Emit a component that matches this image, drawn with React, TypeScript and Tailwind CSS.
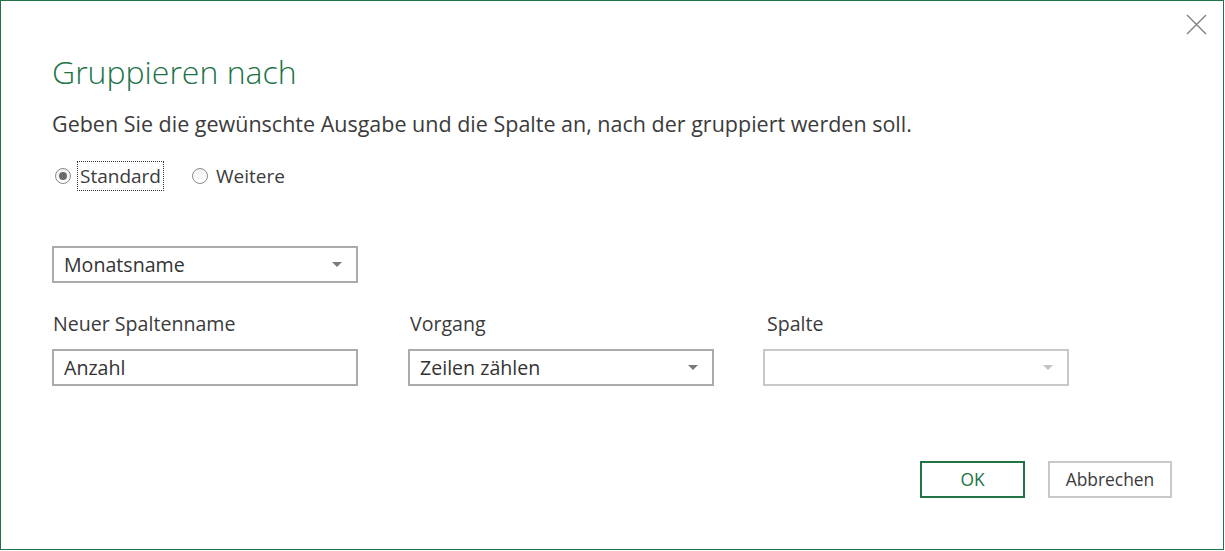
import React from 'react';

function Caret({ light = false }: { light?: boolean }) {
  return (
    <svg width="10" height="6" viewBox="0 0 10 6" className="shrink-0">
      <path d="M0 0 L10 0 L5 5 Z" fill={light ? '#c4c4c4' : '#7a7a7a'} />
    </svg>
  );
}

function Select({ value, disabled = false }: { value?: string; disabled?: boolean }) {
  return (
    <div
      className={
        'w-[306px] h-[37px] flex items-center justify-between pl-[10px] pr-[14px] border-2 bg-white ' +
        (disabled ? 'border-[#c8c8c8]' : 'border-[#ababab]')
      }
    >
      <span className="text-[19.6px] text-[#333] leading-none">{value}</span>
      <Caret light={disabled} />
    </div>
  );
}

function Radio({ checked }: { checked?: boolean }) {
  return (
    <span className="w-[16px] h-[16px] rounded-full border border-[#8a8a8a] bg-gradient-to-b from-[#f2f2f2] to-white flex items-center justify-center shrink-0">
      {checked && <span className="w-[8px] h-[8px] rounded-full bg-[#6b6b6b]" />}
    </span>
  );
}

export default function App() {
  return (
    <div
      className="relative w-[1224px] h-[550px] border border-[#217346] bg-white text-[#333]"
      style={{ fontFamily: '"Open Sans", "Noto Sans", sans-serif' }}
    >
      <button className="absolute right-[16px] top-[13px] w-[21px] h-[21px]">
        <svg width="21" height="21" viewBox="0 0 21 21">
          <path d="M1 1 L20 20 M20 1 L1 20" stroke="#808080" strokeWidth="1.4" />
        </svg>
      </button>

      <div className="pl-[51px] pt-[51px]">
        <h1 className="text-[32px] font-light text-[#217346] leading-[40px]">Gruppieren nach</h1>
        <p className="mt-[19px] text-[21.5px] leading-[26px] text-[#3b3b3b]">
          Geben Sie die gewünschte Ausgabe und die Spalte an, nach der gruppiert werden soll.
        </p>

        <div className="mt-[23px] flex items-center h-[31px] text-[19px] text-[#3b3b3b]">
          <div className="flex items-center">
            <span className="ml-[3px]"><Radio checked /></span>
            <span className="ml-[6px] px-[2px] leading-[28px] border border-dotted border-[#333]">Standard</span>
          </div>
          <div className="flex items-center ml-[28px]">
            <Radio />
            <span className="ml-[8px] leading-[28px]">Weitere</span>
          </div>
        </div>

        <div className="mt-[55px]">
          <Select value="Monatsname" />
        </div>

        <div className="mt-[28px] grid grid-cols-[356px_355px_306px] text-[19.6px] text-[#3b3b3b]">
          <div className="leading-[26px] pl-[1px]">Neuer Spaltenname</div>
          <div className="leading-[26px] pl-[2px]">Vorgang</div>
          <div className="leading-[26px] pl-[4px]">Spalte</div>
        </div>

        <div className="mt-[12px] grid grid-cols-[356px_355px_306px]">
          <div className="w-[306px] h-[37px] flex items-center pl-[10px] border-2 border-[#ababab]">
            <span className="text-[19.6px] leading-none text-[#333]">Anzahl</span>
          </div>
          <div>
            <Select value="Zeilen zählen" />
          </div>
          <div>
            <Select disabled />
          </div>
        </div>

        <div className="mt-[75px] flex justify-end pr-[51px] gap-[23px]">
          <button className="w-[105px] h-[37px] border-2 border-[#217346] text-[17.4px] text-[#217346]">OK</button>
          <button className="w-[124px] h-[37px] border-2 border-[#c8c8c8] text-[17.4px] text-[#3b3b3b]">Abbrechen</button>
        </div>
      </div>
    </div>
  );
}
